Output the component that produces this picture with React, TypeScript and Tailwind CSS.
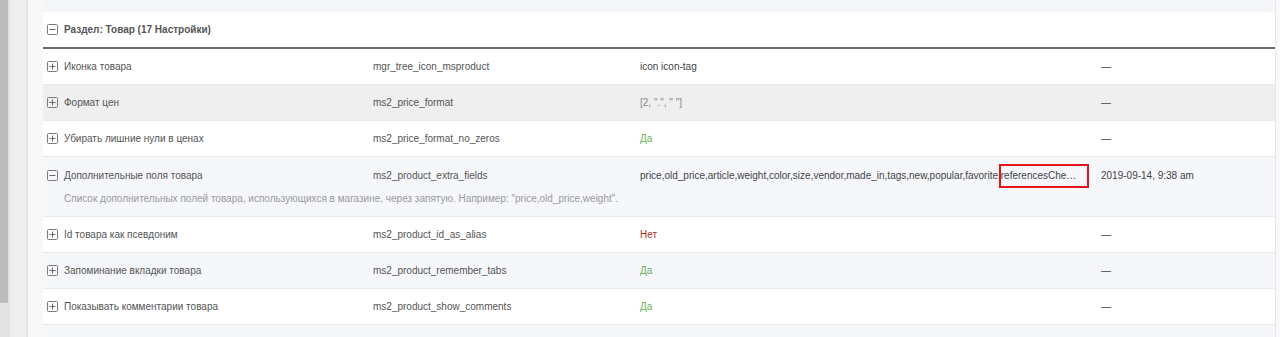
import { ReactNode } from 'react';

type Setting = {
  name: string;
  keyName: string;
  value: ReactNode;
  updated: string;
  description?: string;
  expanded?: boolean;
  bg: string;
};

function ToggleIcon({ open }: { open?: boolean }) {
  return (
    <svg width="11" height="11" viewBox="0 0 11 11" className="shrink-0">
      <rect x="0.5" y="0.5" width="10" height="10" rx="1" fill="none" stroke="#7a7a7a" />
      <line x1="2.5" y1="5.5" x2="8.5" y2="5.5" stroke="#6a6a6a" />
      {!open && <line x1="5.5" y1="2.5" x2="5.5" y2="8.5" stroke="#6a6a6a" />}
    </svg>
  );
}

const yes = <span className="text-[#6cad5c]">Да</span>;
const no = <span className="text-[#b3302a]">Нет</span>;

const settings: Setting[] = [
  { name: 'Иконка товара', keyName: 'mgr_tree_icon_msproduct', value: <span className="text-[#444]">icon icon-tag</span>, updated: '—', bg: 'bg-white' },
  { name: 'Формат цен', keyName: 'ms2_price_format', value: <span className="text-[#888]">[2, ".", " "]</span>, updated: '—', bg: 'bg-[#efefef]' },
  { name: 'Убирать лишние нули в ценах', keyName: 'ms2_price_format_no_zeros', value: yes, updated: '—', bg: 'bg-white' },
  {
    name: 'Дополнительные поля товара',
    keyName: 'ms2_product_extra_fields',
    value: 'extra',
    updated: '2019-09-14, 9:38 am',
    description: 'Список дополнительных полей товара, использующихся в магазине, через запятую. Например: "price,old_price,weight".',
    expanded: true,
    bg: 'bg-[#f5f7fa]',
  },
  { name: 'Id товара как псевдоним', keyName: 'ms2_product_id_as_alias', value: no, updated: '—', bg: 'bg-white' },
  { name: 'Запоминание вкладки товара', keyName: 'ms2_product_remember_tabs', value: yes, updated: '—', bg: 'bg-[#f5f7fa]' },
  { name: 'Показывать комментарии товара', keyName: 'ms2_product_show_comments', value: yes, updated: '—', bg: 'bg-white' },
];

function ExtraFields() {
  return (
    <div className="relative w-full">
      <div className="truncate pr-[12px] text-[#444]">
        price,old_price,article,weight,color,size,vendor,made_in,tags,new,popular,favorite,referencesCheckbox,options
      </div>
      {/* highlight box drawn over the cell */}
      <div className="absolute left-[359px] top-[-4px] h-[24px] w-[90px] border-2 border-[#e3141b]" />
    </div>
  );
}

function SettingRow({ s }: { s: Setting }) {
  return (
    <div className={`${s.bg} border-b border-[#e9e9e9]`}>
      <div
        className={`grid grid-cols-[322px_267px_461px_1fr] items-center ${s.description ? 'h-[37px]' : 'h-[35px]'}`}
      >
        <div className="flex items-center gap-[6px] pl-[4px] text-[#555]">
          <ToggleIcon open={s.expanded} />
          <span>{s.name}</span>
        </div>
        <div className="pl-[8px] text-[#555]">{s.keyName}</div>
        <div className="pl-[8px]">{s.value === 'extra' ? <ExtraFields /> : s.value}</div>
        <div className="pl-[8px] text-[#444]">{s.updated}</div>
      </div>
      {s.description && (
        <div className="pb-[12px] pl-[21px] leading-[10px] text-[#9a9a9a]">{s.description}</div>
      )}
    </div>
  );
}

export default function App() {
  return (
    <div className="flex h-[337px] w-[1280px] overflow-hidden bg-white text-[10px] font-['Liberation_Sans',Arial,sans-serif]">
      {/* page scrollbar */}
      <div className="flex w-[8px] flex-col">
        <div className="h-[303px] bg-[#bcbcbc]" />
        <div className="flex-1 bg-[#e4e4e4]" />
      </div>
      <div className="w-[2px] bg-[#e2e2e2]" />
      <div className="w-[16px] bg-[#efefef]" />
      <div className="w-[2px] bg-[#e4e4e4]" />
      <div className="w-[15px] bg-[#f8f8f8]" />

      <div className="flex w-[1232px] flex-col">
        <div className="h-[12px] bg-[#f4f6fa]" />
        <div className="flex h-[37px] shrink-0 items-center gap-[6px] border-b-2 border-[#6b6b6b] pl-[4px] font-bold text-[#555]">
          <ToggleIcon open />
          <span>Раздел: Товар (17 Настройки)</span>
        </div>
        {settings.map((s) => (
          <SettingRow key={s.keyName} s={s} />
        ))}
        <div className="flex-1 bg-[#f5f7fa]" />
      </div>

      <div className="w-[1px] bg-[#e6e6e6]" />
      <div className="flex-1 bg-[#f9f9f9]" />
    </div>
  );
}
